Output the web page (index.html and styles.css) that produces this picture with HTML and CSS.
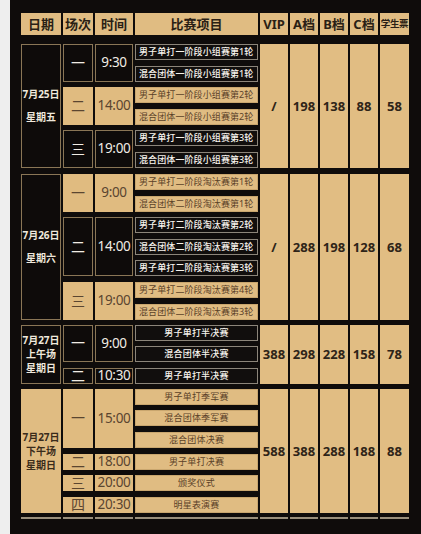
FILE: index.html
```html
<!DOCTYPE html>
<html lang="zh">
<head>
<meta charset="utf-8">
<link rel="stylesheet" href="styles.css">
</head>
<body>
<div class="board">
  <div class="head">
    <div class="hc">日期</div>
    <div class="hc">场次</div>
    <div class="hc">时间</div>
    <div class="hc">比赛项目</div>
    <div class="hc">VIP</div>
    <div class="hc">A档</div>
    <div class="hc">B档</div>
    <div class="hc">C档</div>
    <div class="hc small">学生票</div>
  </div>

  <div class="sec s1">
    <div class="date dark wide"><span>7月25日</span><span>星期五</span></div>
    <div class="rows">
      <div class="row dark">
        <div class="no">一</div><div class="time">9:30</div>
        <div class="evs">
          <div class="ev">男子单打一阶段小组赛第1轮</div>
          <div class="ev">混合团体一阶段小组赛第1轮</div>
        </div>
      </div>
      <div class="row gold">
        <div class="no">二</div><div class="time">14:00</div>
        <div class="evs">
          <div class="ev">男子单打一阶段小组赛第2轮</div>
          <div class="ev">混合团体一阶段小组赛第2轮</div>
        </div>
      </div>
      <div class="row dark">
        <div class="no">三</div><div class="time">19:00</div>
        <div class="evs">
          <div class="ev">男子单打一阶段小组赛第3轮</div>
          <div class="ev">混合团体一阶段小组赛第3轮</div>
        </div>
      </div>
    </div>
    <div class="price">/</div>
    <div class="price">198</div>
    <div class="price">138</div>
    <div class="price">88</div>
    <div class="price">58</div>
  </div>

  <div class="sec s2">
    <div class="date dark wide"><span>7月26日</span><span>星期六</span></div>
    <div class="rows">
      <div class="row gold">
        <div class="no">一</div><div class="time">9:00</div>
        <div class="evs">
          <div class="ev">男子单打二阶段淘汰赛第1轮</div>
          <div class="ev">混合团体二阶段淘汰赛第1轮</div>
        </div>
      </div>
      <div class="row dark">
        <div class="no">二</div><div class="time">14:00</div>
        <div class="evs">
          <div class="ev">男子单打二阶段淘汰赛第2轮</div>
          <div class="ev">混合团体二阶段淘汰赛第2轮</div>
          <div class="ev">男子单打二阶段淘汰赛第3轮</div>
        </div>
      </div>
      <div class="row gold">
        <div class="no">三</div><div class="time">19:00</div>
        <div class="evs">
          <div class="ev">男子单打二阶段淘汰赛第4轮</div>
          <div class="ev">混合团体二阶段淘汰赛第3轮</div>
        </div>
      </div>
    </div>
    <div class="price">/</div>
    <div class="price">288</div>
    <div class="price">198</div>
    <div class="price">128</div>
    <div class="price">68</div>
  </div>

  <div class="sec s3">
    <div class="date dark"><span>7月27日</span><span>上午场</span><span>星期日</span></div>
    <div class="rows">
      <div class="row dark">
        <div class="no">一</div><div class="time">9:00</div>
        <div class="evs center">
          <div class="ev">男子单打半决赛</div>
          <div class="ev">混合团体半决赛</div>
        </div>
      </div>
      <div class="row dark">
        <div class="no">二</div><div class="time">10:30</div>
        <div class="evs center">
          <div class="ev">男子单打半决赛</div>
        </div>
      </div>
    </div>
    <div class="price">388</div>
    <div class="price">298</div>
    <div class="price">228</div>
    <div class="price">158</div>
    <div class="price">78</div>
  </div>

  <div class="sec s4">
    <div class="date gold"><span>7月27日</span><span>下午场</span><span>星期日</span></div>
    <div class="rows">
      <div class="row gold">
        <div class="no">一</div><div class="time">15:00</div>
        <div class="evs center">
          <div class="ev">男子单打季军赛</div>
          <div class="ev">混合团体季军赛</div>
          <div class="ev">混合团体决赛</div>
        </div>
      </div>
      <div class="row gold">
        <div class="no">二</div><div class="time">18:00</div>
        <div class="evs center">
          <div class="ev">男子单打决赛</div>
        </div>
      </div>
      <div class="row gold">
        <div class="no">三</div><div class="time">20:00</div>
        <div class="evs center">
          <div class="ev">颁奖仪式</div>
        </div>
      </div>
      <div class="row gold">
        <div class="no">四</div><div class="time">20:30</div>
        <div class="evs center">
          <div class="ev">明星表演赛</div>
        </div>
      </div>
    </div>
    <div class="price">588</div>
    <div class="price">388</div>
    <div class="price">288</div>
    <div class="price">188</div>
    <div class="price">88</div>
  </div>

  <div class="tail">
    <div></div><div></div><div></div><div></div><div></div><div></div><div></div><div></div><div></div>
  </div>
</div>
</body>
</html>
```

FILE: styles.css
```css
* { box-sizing: border-box; margin: 0; padding: 0; }

html, body { width: 421px; height: 534px; overflow: hidden; }

body {
  background: #eeeeee;
  font-family: "Noto Sans", "Noto Sans CJK SC", sans-serif;
}

.board {
  margin-left: 10px;
  width: 411px;
  height: 534px;
  background: #0f0c0b;
  padding: 13px 0 0 11px;
}

.head {
  display: grid;
  grid-template-columns: 40px 30px 38px 123px repeat(4, 28px) 29px;
  column-gap: 2px;
  height: 22px;
}

.hc {
  background: #e0bc82;
  color: #2a1f15;
  font-weight: 700;
  font-size: 13px;
  line-height: 1;
  display: flex;
  align-items: center;
  justify-content: center;
  white-space: nowrap;
}

.hc.small { font-size: 9.5px; letter-spacing: -0.3px; }

.sec {
  display: grid;
  grid-template-columns: 40px 195px repeat(4, 28px) 29px;
  column-gap: 2px;
  margin-top: 5px;
}

.sec.s1 { margin-top: 9px; }
.sec.s2 { margin-top: 6px; }

.date {
  display: flex;
  flex-direction: column;
  align-items: center;
  justify-content: center;
  font-weight: 700;
  font-size: 10px;
  line-height: 14px;
  white-space: nowrap;
}

.date.wide { gap: 9px; }

.date.dark {
  background: #0e0b0a;
  border: 1px solid #8a7656;
  color: #efe8dc;
}

.date.gold {
  background: #e0bc82;
  color: #3a2b1b;
}

.rows {
  display: flex;
  flex-direction: column;
  gap: 5.6px;
}

.row {
  display: grid;
  grid-template-columns: 30px 38px 123px;
  column-gap: 2px;
}

.no, .time {
  display: flex;
  align-items: center;
  justify-content: center;
  white-space: nowrap;
  line-height: 1;
}

.no { font-size: 14px; }
.time { font-size: 13.5px; letter-spacing: -0.3px; }

.evs {
  display: flex;
  flex-direction: column;
  gap: 5.6px;
}

.ev {
  height: 16px;
  font-size: 9px;
  line-height: 14px;
  letter-spacing: 0.1px;
  padding-left: 3px;
  white-space: nowrap;
  overflow: hidden;
}

.evs.center .ev {
  padding-left: 0;
  text-align: center;
  letter-spacing: 0.2px;
}

.row.dark .no, .row.dark .time {
  background: #0e0b0a;
  border: 1px solid #8a7656;
  color: #f1ece4;
}

.row.dark .ev {
  background: #110e0d;
  border: 1px solid #8c857a;
  color: #f6f2ec;
  font-weight: 500;
}

.row.gold .no, .row.gold .time {
  background: #e0bb80;
  color: #5a4530;
}

.row.gold .ev {
  background: #e0bc82;
  border: 1px solid #c9a66e;
  color: #5a4128;
}

.price {
  background: #e1bd83;
  color: #2e2418;
  font-weight: 700;
  font-size: 13px;
  display: flex;
  align-items: center;
  justify-content: center;
}

.tail {
  display: grid;
  grid-template-columns: 40px 30px 38px 123px repeat(4, 28px) 29px;
  column-gap: 2px;
  margin-top: 4px;
  height: 2px;
}

.tail div { background: #9a8f7c; }
```
